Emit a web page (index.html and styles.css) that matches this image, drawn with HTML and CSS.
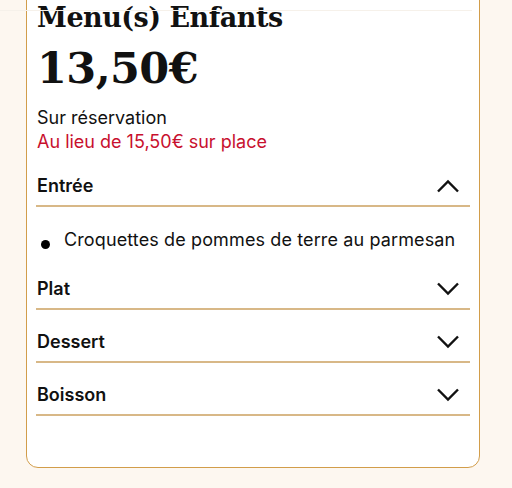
FILE: index.html
```html
<!DOCTYPE html>
<html lang="fr">

    <head>
        <meta name="viewport" content="width=device-width, initial-scale=1">
        <title>Menu(s) Enfants</title>
        <link rel="stylesheet" href="styles.css">
    </head>

    <body>
        <div class="topline"></div>
        <section class="card">
            <h1 class="card-title">Menu(s) Enfants</h1>
            <p class="price">13,50€</p>
            <p class="note">Sur réservation</p>
            <p class="note note-red">Au lieu de 15,50€ sur place</p>

            <div class="course open">
                <div class="course-head">
                    <span>Entrée</span>
                    <svg class="chevron" viewBox="0 0 24 14" aria-hidden="true">
                        <path d="M2 12.5 L12 2.5 L22 12.5" />
                    </svg>
                </div>
            </div>
            <ul class="dishes">
                <li>Croquettes de pommes de terre au parmesan</li>
            </ul>

            <div class="course">
                <div class="course-head">
                    <span>Plat</span>
                    <svg class="chevron" viewBox="0 0 24 14" aria-hidden="true">
                        <path d="M2 1.5 L12 11.5 L22 1.5" />
                    </svg>
                </div>
            </div>

            <div class="course">
                <div class="course-head">
                    <span>Dessert</span>
                    <svg class="chevron" viewBox="0 0 24 14" aria-hidden="true">
                        <path d="M2 1.5 L12 11.5 L22 1.5" />
                    </svg>
                </div>
            </div>

            <div class="course">
                <div class="course-head">
                    <span>Boisson</span>
                    <svg class="chevron" viewBox="0 0 24 14" aria-hidden="true">
                        <path d="M2 1.5 L12 11.5 L22 1.5" />
                    </svg>
                </div>
            </div>
        </section>
    </body>

</html>
```

FILE: styles.css
```css
:root {
    --page-bg: #fdf7f0;
    --card-bg: #ffffff;
    --gold: #d29d4a;
    --rule: #d8b887;
    --fg: #111;
    --red: #c8102e;
}

html {
    font-family: Inter, "Noto Sans", sans-serif;
    color: var(--fg);
}

body {
    margin: 0;
    background-color: var(--page-bg);
}

p {
    margin: 0;
}

.topline {
    position: absolute;
    top: 10px;
    left: 0;
    right: 40px;
    border-top: 1px solid #f6f1ea;
}

.card {
    width: 434px;
    margin: -14px 0 0 26px;
    padding: 11px 9px 51px;
    background-color: var(--card-bg);
    border: 1px solid var(--gold);
    border-radius: 12px;
}

.card-title {
    margin: 0;
    font-family: "DejaVu Serif", serif;
    font-size: 27px;
    font-weight: bold;
    letter-spacing: -0.5px;
    line-height: 40px;
    padding-left: 1px;
}

.price {
    margin-bottom: 8px;
    font-family: "DejaVu Serif", serif;
    font-size: 43px;
    font-weight: bold;
    letter-spacing: -0.6px;
    line-height: 60px;
    padding-left: 1px;
}

.note {
    font-size: 18px;
    line-height: 24px;
    padding-left: 1px;
}

.note-red {
    color: var(--red);
}

.course {
    border-bottom: 2px solid var(--rule);
}

.course-head {
    display: flex;
    justify-content: space-between;
    align-items: center;
    padding: 20px 10px 7px 1px;
    font-size: 18px;
    font-weight: 600;
    line-height: 24px;
}

.chevron {
    width: 24px;
    height: 14px;
    fill: none;
    stroke: #111;
    stroke-width: 2.4;
}

.dishes {
    list-style: none;
    margin: 0;
    padding: 22px 0 6px 5px;

    & li {
        display: flex;
        align-items: center;
        gap: 14px;
        font-size: 18px;
        letter-spacing: 0.12px;
        line-height: 22px;

        &::before {
            content: "";
            flex: none;
            width: 9px;
            height: 9px;
            margin-top: 8px;
            border-radius: 50%;
            background-color: #000;
        }
    }
}
```
